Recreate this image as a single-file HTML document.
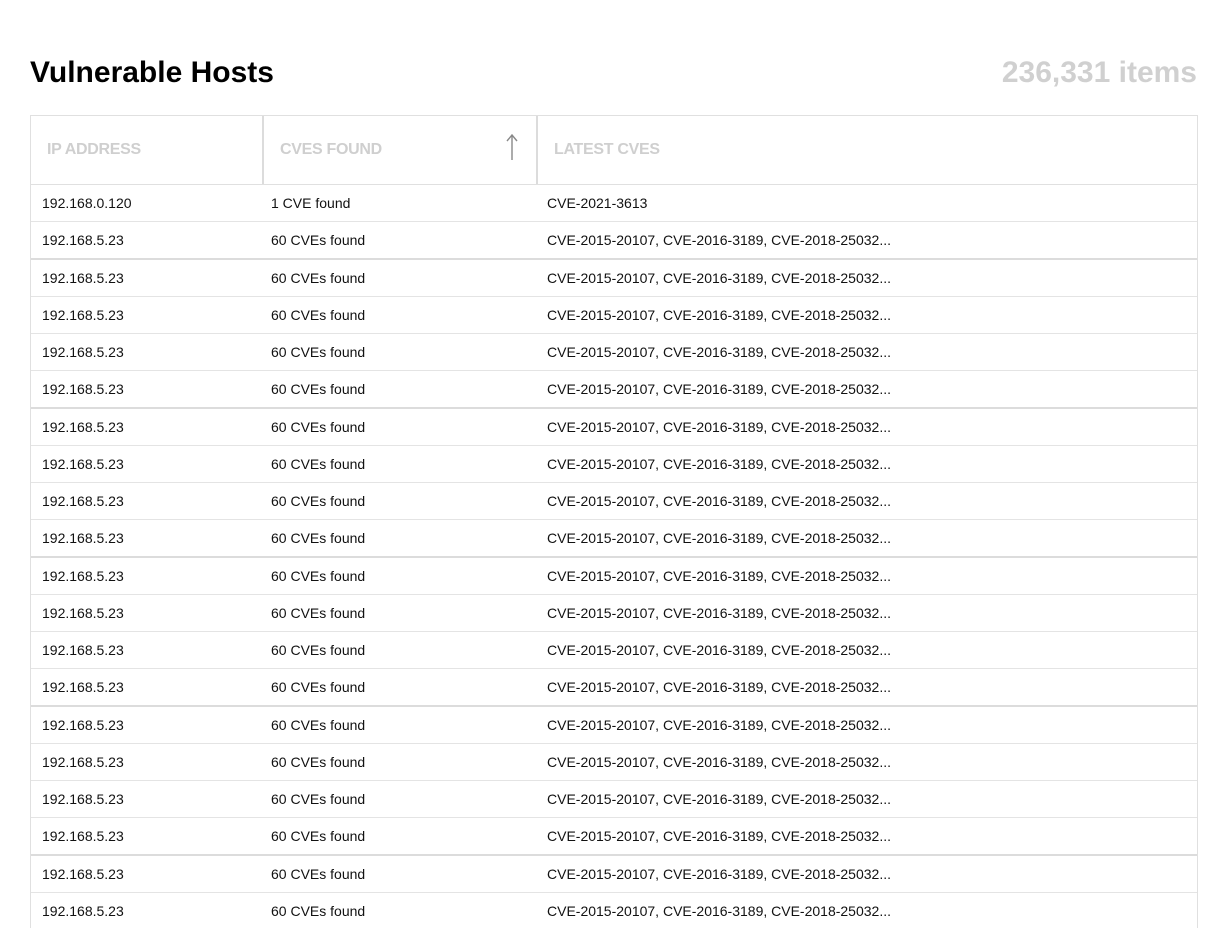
<!DOCTYPE html><html style="height:928px;overflow:hidden"><head><style>
body{margin:0;background:#fff;font-family:"Liberation Sans",Arial,sans-serif;width:1229px;height:928px;overflow:hidden;position:relative}
h1{position:absolute;left:30px;top:55px;margin:0;font-size:30px;font-weight:bold;color:#000;line-height:36px}
.cnt{position:absolute;right:32px;top:55px;font-size:30px;font-weight:bold;color:#d0d0d0;line-height:36px}
.tbl{position:absolute;left:30px;top:115px;width:1166px;border:1px solid #e0e0e0;border-bottom:none;height:813px;overflow:hidden}
.hd{height:68px;border-bottom:1px solid #e0e0e0;position:relative}
.hd div{position:absolute;top:0;height:68px;line-height:68px;font-size:16px;font-weight:bold;color:#cfcfcf;letter-spacing:-0.3px}
.r{height:36px;border-bottom:1px solid #e4e4e4;position:relative;font-size:14px;color:#111;line-height:36px}
.r.t{border-bottom:2px solid #dcdcdc}
.r span{position:absolute;top:0}
</style></head><body>
<h1>Vulnerable Hosts</h1><div class="cnt">236,331 items</div>
<div class="tbl">
<div class="hd">
<div style="left:231px;width:276px;border-left:2px solid #dcdcdc;border-right:2px solid #dcdcdc;padding-left:16px;box-sizing:border-box">CVES FOUND<svg style="position:absolute;right:18px;top:17px" width="12" height="28" viewBox="0 0 12 28"><path d="M6 27V2M1 8L6 2L11 8" fill="none" stroke="#888" stroke-width="1.4"/></svg></div>
<div style="left:16px">IP ADDRESS</div>
<div style="left:523px">LATEST CVES</div>
</div>
<div class="r"><span style="left:11px">192.168.0.120</span><span style="left:240px">1 CVE found</span><span style="left:516px">CVE-2021-3613</span></div>
<div id="rows"></div>
</div>
<script>
var h='';for(var i=2;i<=21;i++){h+='<div class="r'+((i%4==2)?' t':'')+'"><span style="left:11px">192.168.5.23</span><span style="left:240px">60 CVEs found</span><span style="left:516px">CVE-2015-20107, CVE-2016-3189, CVE-2018-25032...</span></div>';}
document.getElementById('rows').outerHTML=h;
</script>
</body></html>
